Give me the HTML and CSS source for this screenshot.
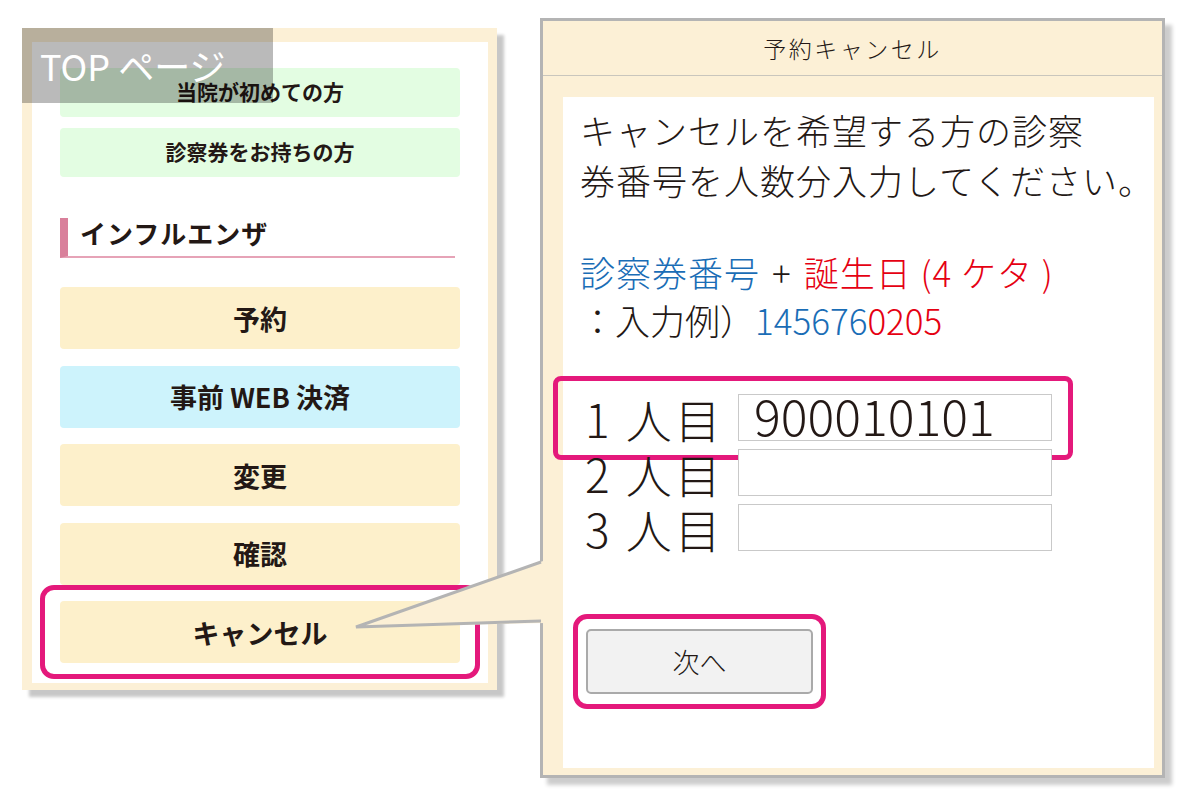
FILE: index.html
```html
<!DOCTYPE html>
<html>
  <head>
    <meta charset="utf-8">
    <title>予約キャンセル</title>
    <link rel="stylesheet" href="styles.css">
  </head>
  <body>
    <div class="stage">
      <div class="phone">
        <a class="menu-btn small green" href="#">当院が初めての方</a>
        <a class="menu-btn small green second" href="#">診察券をお持ちの方</a>
        <h2 class="section-title">インフルエンザ</h2>
        <div class="menu">
          <a class="menu-btn yellow" href="#">予約</a>
          <a class="menu-btn blue" href="#">事前 WEB 決済</a>
          <a class="menu-btn yellow" href="#">変更</a>
          <a class="menu-btn yellow" href="#">確認</a>
          <div class="marked">
            <a class="menu-btn yellow" href="#">キャンセル</a>
            <span class="mark mark-cancel"></span>
          </div>
        </div>
      </div>

      <div class="dialog">
        <div class="dialog-head">予約キャンセル</div>
        <div class="dialog-body">
          <div class="card">
            <p class="lead">キャンセルを希望する方の診察<br>券番号を人数分入力してください。</p>
            <p class="hint">
              <span class="c-blue">診察券番号</span><span class="plus">+</span><span class="c-red">誕生日 (4 ケタ )</span><br><span class="example">：入力例）<span class="c-blue">145676</span><span class="c-red">0205</span></span>
            </p>
            <div class="rows">
              <label class="row">
                <span class="row-label">1 人目</span>
                <input class="field" type="text" value="900010101">
                <span class="mark mark-row"></span>
              </label>
              <label class="row">
                <span class="row-label">2 人目</span>
                <input class="field" type="text">
              </label>
              <label class="row">
                <span class="row-label">3 人目</span>
                <input class="field" type="text">
              </label>
            </div>
            <div class="next-wrap">
              <button class="next-btn" type="button">次へ</button>
              <span class="mark mark-next"></span>
            </div>
          </div>
        </div>
      </div>

      <!-- labels and callout lie over the two panels -->
      <div class="top-label">TOP ページ</div>
      <svg class="callout" width="1200" height="800" viewBox="0 0 1200 800">
        <polygon points="356,627 546,560 546,623" fill="#fcf0d6"/>
        <polyline points="541,562 356,627 541,621" fill="none" stroke="#b4b4b4" stroke-width="3" stroke-linejoin="miter"/>
      </svg>
    </div>
  </body>
</html>
```

FILE: styles.css
```css
body {
  margin: 0;
  background-color: #fff;
  color: #231815;
  font-family: "Noto Sans CJK JP", "Noto Sans", sans-serif;
}

.stage {
  position: relative;
  width: 1200px;
  height: 800px;
  display: flex;
  align-items: flex-start;
  overflow: hidden;
}

/* left: phone menu */
.phone {
  margin: 28px 0 0 22px;
  width: 475px;
  height: 662px;
  box-sizing: border-box;
  border-style: solid;
  border-color: #fcf0d6;
  border-width: 14px 9px 7px 10px;
  padding: 26px 28px 0 28px;
  background-color: #fff;
  box-shadow: 7px 7px 3px rgba(0, 0, 0, 0.22);
}

.menu-btn {
  display: flex;
  align-items: center;
  justify-content: center;
  height: 62px;
  border-radius: 4px;
  color: #231815;
  font-size: 27px;
  font-weight: 700;
  text-decoration: none;
}

.menu-btn.small {
  height: 49px;
  padding-bottom: 4px;
  box-sizing: border-box;
  font-size: 21px;
}

.menu-btn.second {
  margin-top: 11px;
}

.green {
  background-color: #e3fde2;
}

.yellow {
  background-color: #fdf0cb;
}

.blue {
  background-color: #cdf3fc;
}

.section-title {
  margin: 41px 5px 29px 0;
  padding: 0 0 8px 12px;
  border-left: 8px solid #d9809b;
  border-bottom: 2px solid #e6a3b7;
  font-size: 26px;
  font-weight: 700;
  letter-spacing: 1px;
  line-height: 30px;
}

.menu {
  display: flex;
  flex-direction: column;
  gap: 16.5px;
}

.marked {
  position: relative;
}

.mark {
  position: absolute;
  border: 5px solid #e4197b;
  pointer-events: none;
}

.mark-cancel {
  left: -20px;
  right: -20px;
  top: -16px;
  bottom: -16px;
  border-radius: 14px;
}

.top-label {
  position: absolute;
  left: 22px;
  top: 28px;
  width: 233px;
  height: 75px;
  padding-left: 18px;
  background-color: rgba(0, 0, 0, 0.27);
  color: #fff;
  font-size: 36px;
  font-weight: 400;
  line-height: 75px;
  white-space: nowrap;
}

.callout {
  position: absolute;
  left: 0;
  top: 0;
  pointer-events: none;
}

/* right: cancel dialog */
.dialog {
  margin: 18px 0 0 43px;
  width: 625px;
  height: 760px;
  box-sizing: border-box;
  border: 3px solid #b4b4b4;
  background-color: #fcf0d6;
  box-shadow: 7px 7px 4px rgba(0, 0, 0, 0.2);
  display: flex;
  flex-direction: column;
}

.dialog-head {
  height: 54px;
  border-bottom: 1px solid #c9c6bd;
  display: flex;
  align-items: center;
  justify-content: center;
  font-size: 23px;
  font-weight: 300;
  letter-spacing: 2.5px;
}

.dialog-body {
  flex: 1;
  padding: 21px 17px 7px 20px;
  display: flex;
}

.card {
  flex: 1;
  padding: 8px 0 0 17px;
  background-color: #fff;
}

.lead {
  margin: 0;
  font-size: 35px;
  font-weight: 300;
  letter-spacing: 1px;
  line-height: 50px;
  white-space: nowrap;
}

.hint {
  margin: 43px 0 0 0;
  font-size: 35px;
  font-weight: 300;
  letter-spacing: 1px;
  line-height: 48px;
  white-space: nowrap;
}

.hint .example {
  letter-spacing: 0;
}

.plus {
  margin: 0 12px;
}

.c-blue {
  color: #1a6db6;
}

.c-red {
  color: #e50012;
}

.rows {
  margin-top: 46px;
  width: 472px;
}

.row {
  position: relative;
  display: flex;
  align-items: center;
  height: 55px;
}

.row-label {
  width: 158px;
  box-sizing: border-box;
  padding-left: 5px;
  font-size: 46px;
  font-weight: 300;
  letter-spacing: 3px;
  line-height: 46px;
  white-space: nowrap;
}

.field {
  width: 314px;
  height: 47px;
  box-sizing: border-box;
  border: 1px solid #c9c9c9;
  padding: 0 0 8px 15px;
  font-family: "Noto Sans CJK JP", "Noto Sans", sans-serif;
  font-size: 50px;
  font-weight: 300;
  color: #231815;
  background-color: #fff;
}

.mark-row {
  left: -27px;
  right: -21px;
  top: -14px;
  bottom: -15px;
  border-radius: 8px;
}

.next-wrap {
  position: relative;
  display: inline-block;
  margin: 74px 0 0 6px;
}

.next-btn {
  display: block;
  width: 227px;
  height: 65px;
  border: 2px solid #aaa;
  border-radius: 5px;
  background-color: #f2f2f2;
  font-family: "Noto Sans CJK JP", "Noto Sans", sans-serif;
  font-size: 27px;
  font-weight: 300;
  color: #231815;
}

.mark-next {
  left: -13px;
  right: -13px;
  top: -15px;
  bottom: -15px;
  border-radius: 14px;
}
```
